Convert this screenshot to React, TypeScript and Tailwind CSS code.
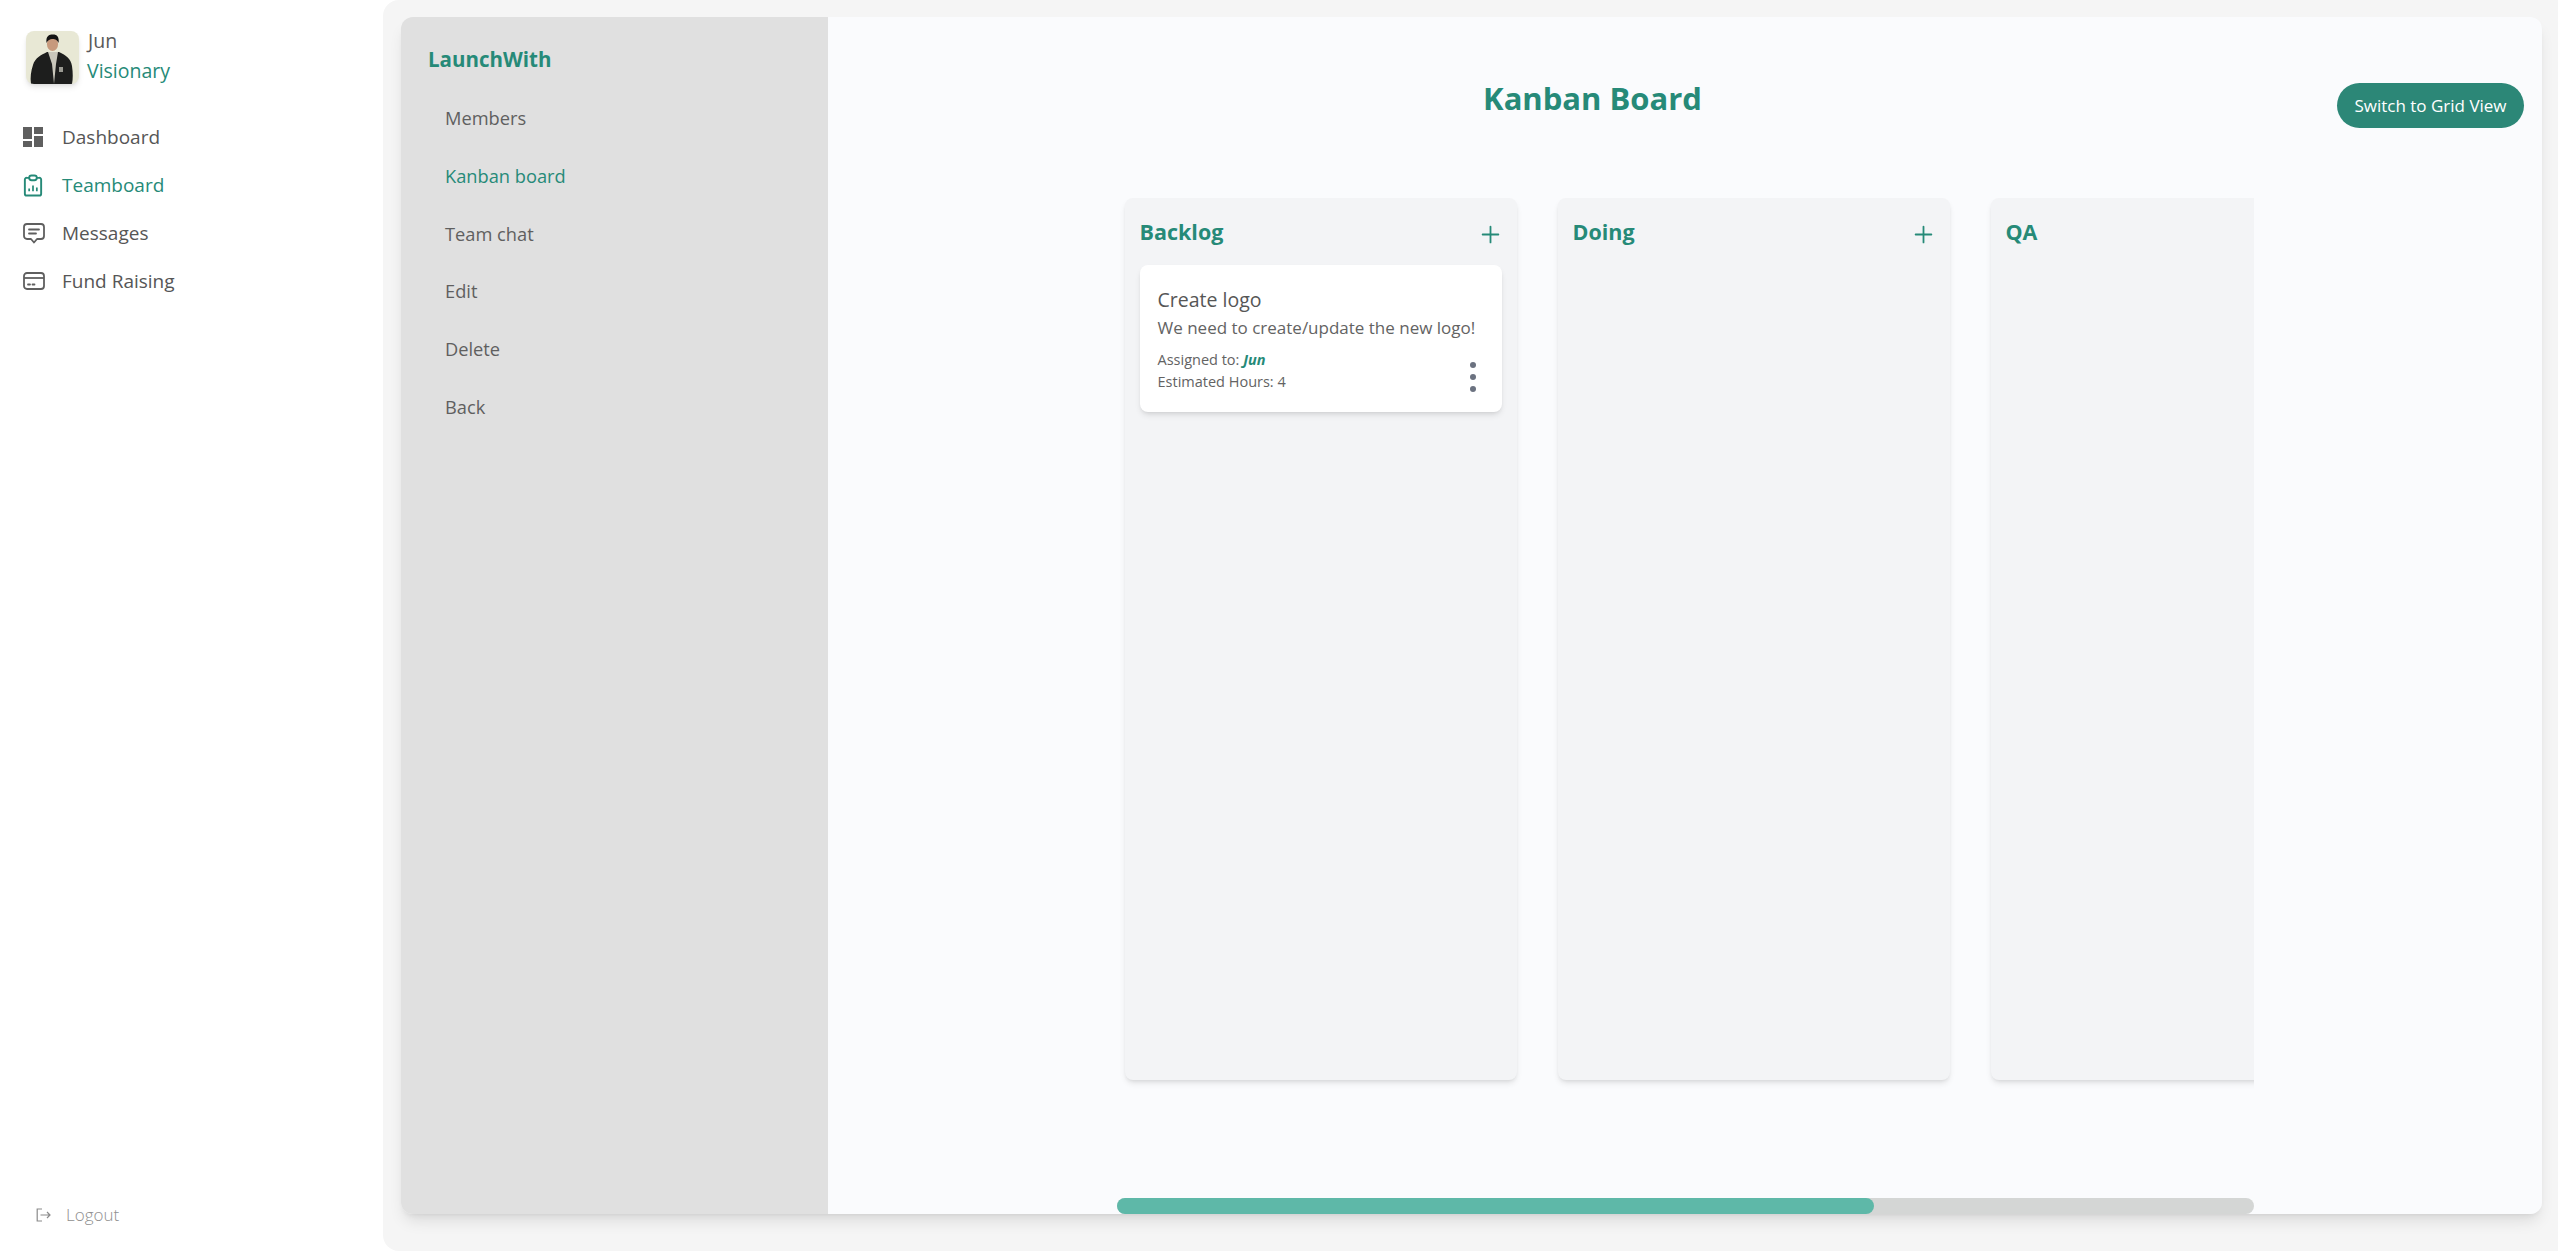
import { Plus } from "lucide-react";

function Avatar() {
  return (
    <div className="h-[53px] w-[53px] shrink-0 overflow-hidden rounded-lg bg-[#e8e8d5] shadow-md">
      <svg viewBox="0 0 53 53" className="h-full w-full">
        <path d="M5 53 C4 46 5 40 7 34 C9 27 15 24 21 21 L33 21 C40 24 45 28 46 35 C47 42 47 48 46 53 Z" fill="#1d1e1d" />
        <path d="M22 21 L26 33 L28 53 L30 33 L32 21 Z" fill="#c9c7bb" />
        <rect x="33" y="36" width="4" height="5" fill="#9a9a92" />
        <ellipse cx="26.5" cy="13" rx="5.6" ry="7" fill="#c79a7d" />
        <path d="M20.5 12 C19.5 5 23 3.5 27 3.5 C31 3.5 33.5 6 32.6 12 C31 8 28 8 26 8 C24 8 22 9 20.5 12 Z" fill="#141414" />
      </svg>
    </div>
  );
}

function DashboardIcon() {
  return (
    <svg viewBox="0 0 20 20" className="h-5 w-5" fill="#5f5f5f">
      <path d="M0 0h9v12H0zM11 0h9v7h-9zM0 14h9v6H0zM11 9h9v11h-9z" />
    </svg>
  );
}

function BoardIcon() {
  return (
    <svg viewBox="0 0 20 24" className="h-[23px] w-5" fill="none" stroke="#268a78" strokeWidth="2">
      <path d="M6 4H3.5A1.8 1.8 0 0 0 1.5 6v14.5a2 2 0 0 0 2 2h13a2 2 0 0 0 2-2V6a1.8 1.8 0 0 0-2-2H14" />
      <rect x="6" y="1.5" width="8" height="5" rx="2.5" />
      <path d="M6 18v-3M10 18v-6M14 18v-4" strokeWidth="1.8" />
    </svg>
  );
}

function MessageIcon() {
  return (
    <svg viewBox="0 0 22 21" className="h-[21px] w-[22px]" fill="none" stroke="#5f5f5f" strokeWidth="1.8">
      <path d="M4 1h14a3 3 0 0 1 3 3v9a3 3 0 0 1-3 3h-4l-3 3.5L8 16H4a3 3 0 0 1-3-3V4a3 3 0 0 1 3-3z" strokeLinejoin="round" />
      <path d="M6 6.5h10M6 10.5h7" strokeLinecap="round" />
    </svg>
  );
}

function CardIcon() {
  return (
    <svg viewBox="0 0 22 18" className="h-[18px] w-[22px]" fill="none" stroke="#5f5f5f" strokeWidth="1.8">
      <rect x="1" y="1" width="20" height="16" rx="3" />
      <path d="M1 6h20" />
      <path d="M5 12.5h2M9.5 12.5h2" strokeLinecap="round" />
    </svg>
  );
}

function LogoutIcon() {
  return (
    <svg viewBox="0 0 15 14" className="h-[14px] w-[15px]" fill="none" stroke="#8a8a8a" strokeWidth="1.2">
      <path d="M6 1H1.2v12H6" />
      <path d="M4.5 7h9.5M11 4l3 3-3 3" />
    </svg>
  );
}

const mainNav = [
  { label: "Dashboard", icon: <DashboardIcon /> },
  { label: "Teamboard", icon: <BoardIcon />, active: true },
  { label: "Messages", icon: <MessageIcon /> },
  { label: "Fund Raising", icon: <CardIcon /> },
];

const subNav = ["Members", "Kanban board", "Team chat", "Edit", "Delete", "Back"];

function Sidebar() {
  return (
    <aside className="flex w-[383px] shrink-0 flex-col bg-white">
      <div className="ml-[26px] mt-[29px] flex items-center gap-2">
        <Avatar />
        <div className="-mt-[3px]">
          <div className="ml-px text-[19.5px] leading-[30px] text-[#5a5a5a]">Jun</div>
          <div className="text-[19.5px] font-medium leading-[30px] text-[#268a78]">Visionary</div>
        </div>
      </div>
      <nav className="ml-[23px] mt-[27px] flex flex-col">
        {mainNav.map((item) => (
          <div key={item.label} className="flex h-[48px] items-center">
            <div className="flex w-[39px] shrink-0 justify-start">{item.icon}</div>
            <span
              className={
                item.active
                  ? "text-[19px] font-medium text-[#268a78]"
                  : "text-[19px] font-medium text-[#565656]"
              }
            >
              {item.label}
            </span>
          </div>
        ))}
      </nav>
      <div className="ml-9 mt-auto mb-[24px] flex h-6 items-center gap-[15px]">
        <LogoutIcon />
        <span className="text-[17px] font-light text-[#8f8f8f]">Logout</span>
      </div>
    </aside>
  );
}

function KanbanColumn({ title, children }: { title: string; children?: React.ReactNode }) {
  return (
    <div className="flex h-[882px] w-[392px] shrink-0 flex-col rounded-lg bg-[#f3f4f6] px-[15px] shadow-md">
      <div className="flex h-[67px] shrink-0 items-start justify-between pt-[19px]">
        <h3 className="text-[21.5px] font-bold leading-[30px] text-[#268a78]">{title}</h3>
        {title !== "QA" && <Plus size={27} strokeWidth={1.6} className="-mr-[2px] mt-[4px] text-[#268a78]" />}
      </div>
      {children}
    </div>
  );
}

function TaskCard() {
  return (
    <div className="relative h-[147px] rounded-lg bg-white px-[18px] pt-[21px] shadow-md">
      <div className="text-[19.5px] font-medium leading-[28px] text-[#565656]">Create logo</div>
      <div className="mt-px text-[17px] leading-[26px] text-[#636363]">We need to create/update the new logo!</div>
      <div className="mt-[8px] text-[14.5px] leading-[22px] text-[#636363]">
        Assigned to: <span className="font-bold italic text-[#268a78]">Jun</span>
        <br />
        Estimated Hours: 4
      </div>
      <div className="absolute bottom-[20px] right-[26px] flex flex-col gap-[6px]">
        <span className="h-[6px] w-[6px] rounded-full bg-[#6b7280]" />
        <span className="h-[6px] w-[6px] rounded-full bg-[#6b7280]" />
        <span className="h-[6px] w-[6px] rounded-full bg-[#6b7280]" />
      </div>
    </div>
  );
}

export default function App() {
  return (
    <div className="flex h-screen w-full overflow-hidden bg-white font-['Open_Sans','Liberation_Sans',sans-serif]">
      <Sidebar />
      <main className="min-w-0 flex-1 rounded-l-2xl bg-[#f5f5f5] pb-[37px] pl-[18px] pr-4 pt-[17px]">
        <div className="flex h-full overflow-hidden rounded-xl shadow-lg">
          {/* Project menu */}
          <div className="w-[427px] shrink-0 bg-[#e0e0e0] pl-[27px] pt-[26px]">
            <h2 className="text-[20.5px] font-bold leading-[32px] text-[#268a78]">LaunchWith</h2>
            <ul className="mt-[14px] pl-[17px]">
              {subNav.map((item) => (
                <li
                  key={item}
                  className={
                    item === "Kanban board"
                      ? "flex h-[57.7px] items-center text-[18.25px] text-[#268a78]"
                      : "flex h-[57.7px] items-center text-[18.25px] text-[#5f5f5f]"
                  }
                >
                  {item}
                </li>
              ))}
            </ul>
          </div>

          {/* Board */}
          <div className="flex min-w-0 flex-1 flex-col bg-[#fafbfd]">
            <div className="flex h-[181px] shrink-0 items-start pl-5 pr-[18px]">
              <h1 className="flex-1 pt-[58px] text-center text-[31px] font-bold leading-[46px] text-[#268a78]">
                Kanban Board
              </h1>
              <button className="mt-[66px] h-[45px] w-[187px] rounded-full bg-[#2c8777] text-[17px] text-white">
                Switch to Grid View
              </button>
            </div>
            <div className="mx-auto flex w-[1137px] flex-1 flex-col">
              <div className="flex min-h-0 flex-1 gap-[41px] overflow-hidden pl-2">
                <KanbanColumn title="Backlog">
                  <TaskCard />
                </KanbanColumn>
                <KanbanColumn title="Doing" />
                <KanbanColumn title="QA" />
              </div>
              <div className="h-4 rounded-full bg-[#d4d6d5]">
                <div className="h-4 w-[757px] rounded-full bg-[#5eb8a8]" />
              </div>
            </div>
          </div>
        </div>
      </main>
    </div>
  );
}
